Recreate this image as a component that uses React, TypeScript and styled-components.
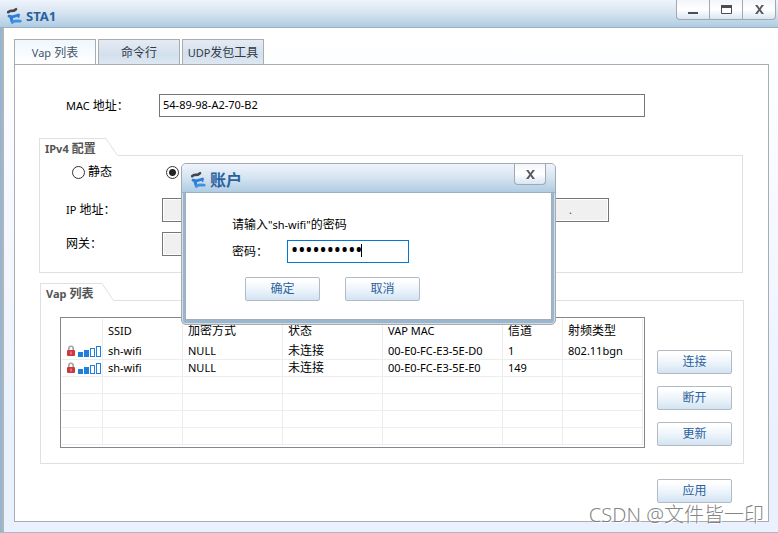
import React from "react";
import styled, { createGlobalStyle } from "styled-components";

const Global = createGlobalStyle`
  * { box-sizing: border-box; }
  body { margin: 0; }
  body, button, input {
    font-family: "Noto Sans", "Noto Sans CJK SC", sans-serif;
    font-size: 12px;
    line-height: 16px;
    color: #000;
  }
`;

const Latin = styled.span`
  font-size: 11px;
`;

const Window = styled.div`
  position: relative;
  min-height: 100vh;
  display: flex;
  flex-direction: column;
  border-left: 2px solid #92b6d3;
  border-bottom: 1px solid #b4b6ba;
  background: #e9f1ff;
`;

const TitleBar = styled.header<{ $dialog?: boolean }>`
  display: flex;
  align-items: center;
  justify-content: space-between;
  height: ${(p) => (p.$dialog ? 29 : 28)}px;
  margin-left: ${(p) => (p.$dialog ? 0 : -2)}px;
  padding-left: ${(p) => (p.$dialog ? 8 : 6)}px;
  padding-right: ${(p) => (p.$dialog ? 9 : 2)}px;
  background: linear-gradient(#eff4fc, #d5e3f0 50%, #afcce3);
  border-bottom: 1px solid #9bb0c2;
`;

const Brand = styled.div`
  display: flex;
  align-items: center;
  gap: 3px;
  height: 100%;
  padding-top: 4px;
`;

const Title = styled.h1<{ $large?: boolean }>`
  margin: 0;
  color: #2a62a0;
  font-size: ${(p) => (p.$large ? 16 : 13)}px;
  line-height: 20px;
  font-weight: 700;
`;

const Controls = styled.div`
  display: flex;
  align-self: flex-start;
`;

const ControlButton = styled.button<{ $narrow?: boolean }>`
  width: ${(p) => (p.$narrow ? 32 : 34)}px;
  height: ${(p) => (p.$narrow ? 21 : 20)}px;
  margin-left: -1px;
  padding: 0;
  display: flex;
  align-items: center;
  justify-content: center;
  background: linear-gradient(#f2f6fb, #fff 50%, #d8e6f3);
  border: 1px solid #a3a8ad;
  border-top: 0;
  &:first-child { border-bottom-left-radius: 4px; }
  &:last-child { border-bottom-right-radius: 4px; }
`;

const Body = styled.main`
  flex: 1;
  display: flex;
  flex-direction: column;
  padding: 11px 9px 10px 10px;
  border-left: 2px solid #b3b4b6;
  background: linear-gradient(#fff, #e9f1ff 80%);
`;

const Tabs = styled.div`
  display: flex;
  gap: 2px;
`;

const Tab = styled.button<{ $active?: boolean }>`
  width: 82px;
  height: 25px;
  padding: 1px 0 0;
  white-space: nowrap;
  border: 1px solid #a8adb2;
  border-bottom: 0;
  color: ${(p) => (p.$active ? "#45576c" : "#303a46")};
  background: ${(p) =>
    p.$active
      ? "linear-gradient(#eff7fd, #fff)"
      : "linear-gradient(#e5ebf3, #d3e0ed 60%, #dde7f1)"};
`;

const Panel = styled.section`
  flex: 1;
  display: flex;
  flex-direction: column;
  padding: 29px 25px 18px 24px;
  background: #fff;
  border: 1px solid #a8adb2;
`;

const MacRow = styled.div`
  display: flex;
  align-items: center;
  padding: 0 98px 0 27px;
  margin-bottom: 21px;
`;

const FieldLabel = styled.label<{ $width: number }>`
  width: ${(p) => p.$width}px;
  flex: none;
`;

const TextField = styled.input<{ $width?: number }>`
  ${(p) => (p.$width ? `width: ${p.$width}px;` : "flex: 1; min-width: 0;")}
  height: 23px;
  padding: 0 3px 2px;
  font-size: 11px;
  border: 1px solid #767676;
  border-radius: 0;
  background: #fff;
  outline: 0;
  &:disabled {
    height: 24px;
    background: #f0f0f0;
    box-shadow: inset 0 0 0 1px #fff;
    color: #444;
  }
`;

const Group = styled.section`
  display: flex;
  flex-direction: column;
`;

const GroupHead = styled.div`
  display: flex;
  height: 18px;
`;

const GroupTitle = styled.h2<{ $width: number }>`
  width: ${(p) => p.$width}px;
  margin: 0;
  padding: 1px 0 0 5px;
  font-size: 12px;
  line-height: 18px;
  font-weight: 700;
  color: #555;
  white-space: nowrap;
  border-top: 1px solid #e0e0e0;
  border-left: 1px solid #e0e0e0;
`;

const GroupRule = styled.div`
  flex: 1;
  border-bottom: 1px solid #e0e0e0;
`;

const GroupBody = styled.div`
  border: 1px solid #e0e0e0;
  border-top: 0;
`;

const Ipv4Body = styled(GroupBody)`
  display: flex;
  flex-direction: column;
  height: 117px;
  padding-left: 26px;
  padding-top: 7px;
`;

const RadioRow = styled.div`
  display: flex;
  align-items: center;
  gap: 54px;
  height: 18px;
  padding-left: 6px;
`;

const RadioLabel = styled.label`
  display: flex;
  align-items: center;
  gap: 3px;
`;

const Radio = styled.input`
  appearance: none;
  width: 13px;
  height: 13px;
  margin: 0;
  border: 1px solid #333;
  border-radius: 50%;
  background: #fff;
  &:checked {
    background: radial-gradient(circle, #222 0 3px, #fff 4px);
  }
`;

const AddressRow = styled.div`
  display: flex;
  align-items: center;
  height: 24px;
  margin-top: 10px;
  &:nth-child(2) { margin-top: 17px; }
`;

const MaskField = styled(TextField)`
  margin-left: 160px;
  padding-left: 118px;
`;

const ListGroup = styled(Group)`
  margin: 10px -1px 15px 1px;
`;

const ListBody = styled(GroupBody)`
  display: flex;
  gap: 12px;
  padding: 16px 11px 15px 19px;
`;

const TableBox = styled.div`
  flex: 1;
  min-width: 0;
  padding: 1px 1px 2px;
  border: 1px solid #828790;
`;

const Table = styled.table`
  width: 100%;
  table-layout: fixed;
  border-collapse: separate;
  border-spacing: 0;
  th, td {
    padding: 0 0 0 5px;
    height: 17px;
    line-height: 16px;
    text-align: left;
    font-weight: 400;
    white-space: nowrap;
    border-right: 1px solid #ededed;
    border-bottom: 1px solid #ededed;
  }
  th {
    height: 24px;
    line-height: 24px;
    border-bottom: 0;
  }
`;

const Col = styled.col<{ $width: number }>`
  width: ${(p) => p.$width}px;
`;

const StatusIcons = styled.div`
  display: flex;
  align-items: center;
  gap: 3px;
  height: 16px;
`;

const ButtonColumn = styled.div`
  display: flex;
  flex-direction: column;
  gap: 12px;
  padding-top: 33px;
`;

const PushButton = styled.button`
  width: 75px;
  height: 24px;
  padding: 0;
  color: #2a62a0;
  background: linear-gradient(#fff 10%, #e9f2fa 60%, #d2e3f2);
  border: 1px solid #b3bac3;
  border-radius: 2px;
`;

const Footer = styled.footer`
  display: flex;
  justify-content: flex-end;
  padding-right: 11px;
`;

const Dialog = styled.div`
  position: absolute;
  left: 179px;
  top: 163px;
  width: 375px;
  border: 1px solid #a6a9ad;
  border-radius: 5px;
  overflow: hidden;
  background: #9ab6ce;
  box-shadow: inset 0 0 0 1px #d4dde6;
`;

const DialogBody = styled.form`
  display: flex;
  flex-direction: column;
  height: 127px;
  margin: 0 3px 4px;
  padding: 24px 0 0 46px;
  background: #fff;
  border: 1px solid #a3adb8;
  border-top: 0;
`;

const Prompt = styled.p`
  margin: 0 0 7px;
`;

const PasswordRow = styled.div`
  display: flex;
  align-items: center;
`;

const PasswordBox = styled.div`
  display: flex;
  align-items: center;
  width: 122px;
  height: 23px;
  border: 1px solid #0078d7;
  padding: 0 0 3px 3px;
`;

const PasswordInput = styled.input`
  width: 70px;
  height: 18px;
  padding: 0;
  border: 0;
  outline: 0;
  background: transparent;
  font-size: 19px;
  line-height: 18px;
`;

const Caret = styled.span`
  width: 1px;
  height: 13px;
  background: #000;
`;

const DialogButtons = styled.div`
  display: flex;
  gap: 25px;
  padding: 14px 0 0 13px;
`;

const Watermark = styled.div`
  position: absolute;
  right: 14px;
  bottom: 3px;
  font-size: 20px;
  font-weight: 300;
  line-height: 28px;
  color: rgba(110, 110, 110, 0.85);
  text-shadow: 1px 1px 0 #fff;
  white-space: nowrap;
  pointer-events: none;
`;

const Logo = () => (
  <svg width="17" height="18" viewBox="0 0 17 18" fill="none" strokeLinecap="round" strokeLinejoin="round" aria-hidden="true">
    <path d="M2.200 5.200L4 4l4-.4 2-1.400" stroke="#46464a" strokeWidth="2.600" />
    <path d="M3 9.200l3.500.6L12.500 8" stroke="#2b7fd8" strokeWidth="2.800" />
    <path d="M5 10.500L6.300 15" stroke="#2b7fd8" strokeWidth="3" />
    <path d="M6.300 15.200l3-1.200 5 .2" stroke="#3d92e6" strokeWidth="2.800" />
    <path d="M12.500 8.400v1.600" stroke="#2b7fd8" strokeWidth="2" />
  </svg>
);

const Lock = () => (
  <svg width="8" height="12" viewBox="0 0 8 12" aria-hidden="true">
    <path d="M1.800 6V3.500a2.200 2.200 0 0 1 4.400 0V6" fill="none" stroke="#a4a0a0" strokeWidth="1.600" />
    <rect x="0" y="5" width="8" height="6" rx="1" fill="#cf3740" />
    <path d="M4 6.500v3" stroke="#f0a8ac" strokeWidth="1" />
  </svg>
);

const Signal = () => (
  <svg width="23" height="11" viewBox="0 0 23 11" shapeRendering="crispEdges" aria-hidden="true">
    <path d="M0 6h5v5H0zM6 4h5v7H6z" fill="#1e7fe0" />
    <path d="M12.500 2.500h4v8h-4zM18.500 .5h4v10h-4z" fill="#fff" stroke="#1e7fe0" />
  </svg>
);

const Cross = () => (
  <svg width="9" height="9" viewBox="0 0 9 9" aria-hidden="true">
    <path d="M0 0h2.500L4.500 3.100 6.500 0H9L5.700 4.500 9 9H6.500L4.500 5.900 2.500 9H0l3.300-4.500z" fill="#5a5a62" />
  </svg>
);

const columns = [
  { name: "", width: 41 },
  { name: "SSID", width: 80, latin: true },
  { name: "加密方式", width: 100 },
  { name: "状态", width: 100 },
  { name: "VAP MAC", width: 120, latin: true },
  { name: "信道", width: 60 },
  { name: "射频类型", width: 80 },
];

const rows = [
  { ssid: "sh-wifi", cipher: "NULL", state: "未连接", mac: "00-E0-FC-E3-5E-D0", channel: "1", type: "802.11bgn" },
  { ssid: "sh-wifi", cipher: "NULL", state: "未连接", mac: "00-E0-FC-E3-5E-E0", channel: "149", type: "" },
];

const emptyRows = [0, 1, 2, 3];

export default function App() {
  return (
    <>
      <Global />
      <Window>
        <TitleBar>
          <Brand>
            <Logo />
            <Title>STA1</Title>
          </Brand>
          <Controls>
            <ControlButton aria-label="Minimize">
              <svg width="10" height="9" viewBox="0 0 10 9" aria-hidden="true">
                <path d="M0 7h10v2H0z" fill="#4c4c54" />
              </svg>
            </ControlButton>
            <ControlButton aria-label="Maximize">
              <svg width="11" height="9" viewBox="0 0 11 9" aria-hidden="true">
                <path d="M.5 .5h10v8H.5z" fill="#fff" stroke="#4c4c54" />
                <path d="M0 0h11v3H0z" fill="#4c4c54" />
              </svg>
            </ControlButton>
            <ControlButton aria-label="Close">
              <Cross />
            </ControlButton>
          </Controls>
        </TitleBar>

        <Body>
          <Tabs role="tablist">
            <Tab role="tab" aria-selected="true" $active>
              <Latin>Vap</Latin> 列表
            </Tab>
            <Tab role="tab">命令行</Tab>
            <Tab role="tab">
              <Latin>UDP</Latin>发包工具
            </Tab>
          </Tabs>

          <Panel>
            <MacRow>
              <FieldLabel htmlFor="mac" $width={93}>
                <Latin>MAC</Latin> 地址：
              </FieldLabel>
              <TextField id="mac" defaultValue="54-89-98-A2-70-B2" />
            </MacRow>

            <Group>
              <GroupHead>
                <GroupTitle $width={67}>
                  <Latin>IPv4</Latin> 配置
                </GroupTitle>
                <svg width="12" height="18" viewBox="0 0 12 18" fill="none" aria-hidden="true">
                  <path d="M0 .5L11.500 17.500" stroke="#e0e0e0" />
                </svg>
                <GroupRule />
              </GroupHead>
              <Ipv4Body>
                <RadioRow>
                  <RadioLabel>
                    <Radio type="radio" name="mode" />
                    静态
                  </RadioLabel>
                  <Radio type="radio" name="mode" defaultChecked aria-label="DHCP" />
                </RadioRow>
                <AddressRow>
                  <FieldLabel htmlFor="ip" $width={96}>
                    <Latin>IP</Latin> 地址：
                  </FieldLabel>
                  <TextField id="ip" $width={128} disabled />
                  <MaskField $width={159} disabled defaultValue="." aria-label="Mask" />
                </AddressRow>
                <AddressRow>
                  <FieldLabel htmlFor="gateway" $width={96}>
                    网关：
                  </FieldLabel>
                  <TextField id="gateway" $width={128} disabled />
                </AddressRow>
              </Ipv4Body>
            </Group>

            <ListGroup>
              <GroupHead>
                <GroupTitle $width={62}>
                  <Latin>Vap</Latin> 列表
                </GroupTitle>
                <svg width="12" height="18" viewBox="0 0 12 18" fill="none" aria-hidden="true">
                  <path d="M0 .5L11.500 17.500" stroke="#e0e0e0" />
                </svg>
                <GroupRule />
              </GroupHead>
              <ListBody>
                <TableBox>
                  <Table>
                    <colgroup>
                      {columns.map((c) => (
                        <Col key={c.width + c.name} $width={c.width} />
                      ))}
                    </colgroup>
                    <thead>
                      <tr>
                        {columns.map((c) => (
                          <th key={c.width + c.name}>{c.latin ? <Latin>{c.name}</Latin> : c.name}</th>
                        ))}
                      </tr>
                    </thead>
                    <tbody>
                      {rows.map((r) => (
                        <tr key={r.mac}>
                          <td>
                            <StatusIcons>
                              <Lock />
                              <Signal />
                            </StatusIcons>
                          </td>
                          <td><Latin>{r.ssid}</Latin></td>
                          <td><Latin>{r.cipher}</Latin></td>
                          <td>{r.state}</td>
                          <td><Latin>{r.mac}</Latin></td>
                          <td><Latin>{r.channel}</Latin></td>
                          <td><Latin>{r.type}</Latin></td>
                        </tr>
                      ))}
                      {emptyRows.map((i) => (
                        <tr key={i}>
                          {columns.map((c) => (
                            <td key={c.width + c.name} />
                          ))}
                        </tr>
                      ))}
                    </tbody>
                  </Table>
                </TableBox>
                <ButtonColumn>
                  <PushButton>连接</PushButton>
                  <PushButton>断开</PushButton>
                  <PushButton>更新</PushButton>
                </ButtonColumn>
              </ListBody>
            </ListGroup>

            <Footer>
              <PushButton>应用</PushButton>
            </Footer>
          </Panel>
        </Body>

        <Dialog role="dialog" aria-label="账户">
          <TitleBar $dialog>
            <Brand>
              <Logo />
              <Title as="h2" $large>账户</Title>
            </Brand>
            <Controls>
              <ControlButton $narrow aria-label="Close">
                <Cross />
              </ControlButton>
            </Controls>
          </TitleBar>
          <DialogBody>
            <Prompt>
              请输入<Latin>"sh-wifi"</Latin>的密码
            </Prompt>
            <PasswordRow>
              <FieldLabel htmlFor="password" $width={55}>密码：</FieldLabel>
              <PasswordBox>
                <PasswordInput id="password" type="password" defaultValue="0123456789" />
                <Caret />
              </PasswordBox>
            </PasswordRow>
            <DialogButtons>
              <PushButton type="button">确定</PushButton>
              <PushButton type="button">取消</PushButton>
            </DialogButtons>
          </DialogBody>
        </Dialog>

        <Watermark>CSDN @文件皆一印</Watermark>
      </Window>
    </>
  );
}
